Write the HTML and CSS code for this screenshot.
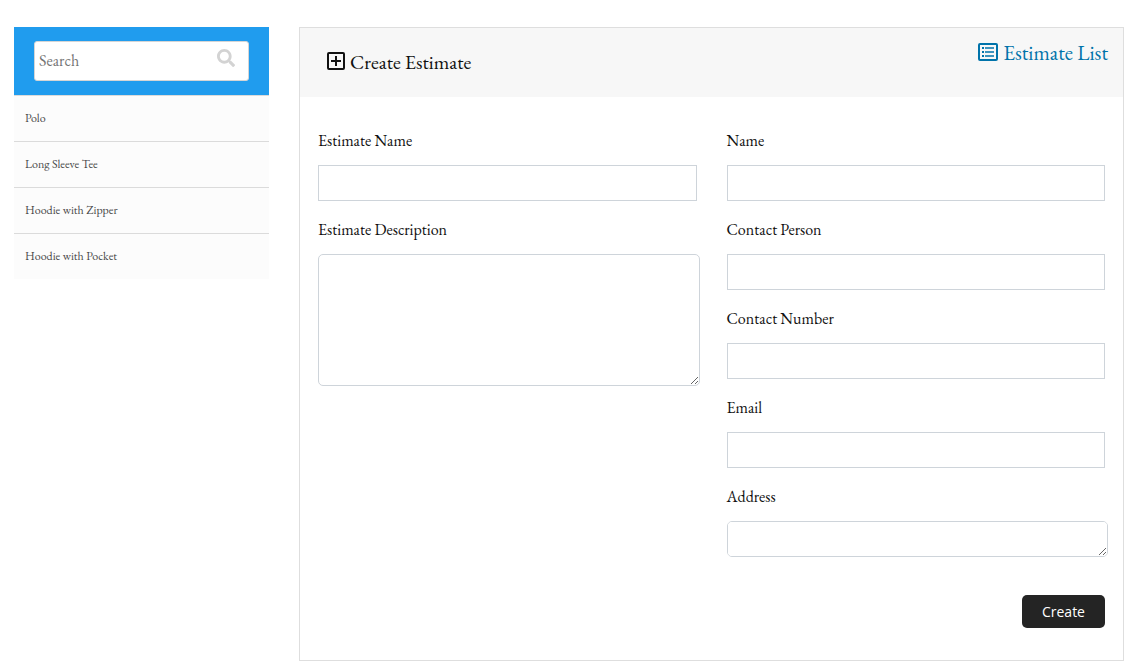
FILE: index.html
```html
<!DOCTYPE html>
<html lang="en">
<head>
<meta charset="utf-8">
<meta name="viewport" content="width=device-width, initial-scale=1">
<title>Create Estimate</title>
<link rel="stylesheet" href="styles.css">
</head>
<body>
<div class="page">
  <aside class="sidebar">
    <form class="search" role="search">
      <div class="search-box">
        <input class="search-input" type="search" placeholder="Search" aria-label="Search">
        <button class="search-button" type="submit" aria-label="Search">
          <svg width="18" height="18" viewBox="0 0 512 512" fill="currentColor" aria-hidden="true"><path d="M505 442.700 405.300 343c-4.500-4.500-10.600-7-17-7H372c27.600-35.300 44-79.700 44-128C416 93.100 322.900 0 208 0S0 93.100 0 208s93.100 208 208 208c48.300 0 92.700-16.400 128-44v16.300c0 6.400 2.500 12.500 7 17l99.700 99.700c9.400 9.400 24.600 9.400 33.900 0l28.300-28.300c9.400-9.400 9.400-24.600.1-34zM208 336c-70.700 0-128-57.200-128-128 0-70.700 57.200-128 128-128 70.700 0 128 57.200 128 128 0 70.700-57.200 128-128 128z"/></svg>
        </button>
      </div>
    </form>
    <nav class="products" aria-label="Products">
      <a class="product" href="#">Polo</a>
      <a class="product" href="#">Long Sleeve Tee</a>
      <a class="product" href="#">Hoodie with Zipper</a>
      <a class="product" href="#">Hoodie with Pocket</a>
    </nav>
  </aside>

  <main class="panel">
    <header class="panel-header">
      <h1 class="title">
        <svg width="18" height="18" viewBox="0 0 18 18" fill="none" stroke="currentColor" stroke-width="2" aria-hidden="true"><rect x="1" y="1" width="16" height="16" rx="1"/><path d="M9 4v10M4 9h10"/></svg>
        Create Estimate
      </h1>
      <a class="list-link" href="#">
        <svg width="20" height="18" viewBox="0 0 20 18" fill="none" stroke="currentColor" aria-hidden="true"><rect x="1" y="1" width="18" height="16" rx="1" stroke-width="2"/><path d="M7 5h9M7 9h9M7 13h9" stroke-width="1.500"/><path d="M4 5h2M4 9h2M4 13h2" stroke-width="2"/></svg>
        Estimate List
      </a>
    </header>
    <form class="form">
      <div class="column">
        <div class="field">
          <label class="label" for="estimate-name">Estimate Name</label>
          <input class="input" id="estimate-name" type="text">
        </div>
        <div class="field">
          <label class="label" for="description">Estimate Description</label>
          <textarea class="input textarea textarea-tall" id="description"></textarea>
        </div>
      </div>
      <div class="column">
        <div class="field">
          <label class="label" for="name">Name</label>
          <input class="input" id="name" type="text">
        </div>
        <div class="field">
          <label class="label" for="person">Contact Person</label>
          <input class="input" id="person" type="text">
        </div>
        <div class="field">
          <label class="label" for="number">Contact Number</label>
          <input class="input" id="number" type="tel">
        </div>
        <div class="field">
          <label class="label" for="email">Email</label>
          <input class="input" id="email" type="email">
        </div>
        <div class="field">
          <label class="label" for="address">Address</label>
          <textarea class="input textarea" id="address"></textarea>
        </div>
        <button class="submit" type="submit">Create</button>
      </div>
    </form>
  </main>
</div>
</body>
</html>
```

FILE: styles.css
```css
*,
*::before,
*::after {
  box-sizing: border-box;
}

body {
  margin: 0;
  background: #fff;
  color: #111;
  font: 16px/24px "EB Garamond", "Liberation Serif", serif;
}

.page {
  display: flex;
  align-items: flex-start;
  gap: 30px;
  padding: 27px 16px 6px 14px;
}

.sidebar {
  flex: 0 0 255px;
  min-width: 0;
}

.search {
  padding: 14px 20px;
  background: #209cee;
}

.search-box {
  display: flex;
  height: 40px;
  border: 1px solid #d5d5d5;
  border-radius: 3px;
  background: #fff;
}

.search-input {
  flex: 1;
  min-width: 0;
  padding: 0 4px;
  border: 0;
  background: none;
  color: #444;
  font: inherit;
  outline: none;
}

.search-input::placeholder {
  color: #757575;
  opacity: 1;
}

.search-button {
  display: flex;
  align-items: flex-start;
  padding: 7px 13px;
  border: 0;
  background: none;
  color: #d3d3d3;
}

.product {
  display: block;
  padding: 10px 11px 11px;
  border-top: 1px solid #dbdbdb;
  background: #fcfcfc;
  color: #4a4a4a;
  font-size: 12px;
  text-decoration: none;
}

.panel {
  flex: 1;
  min-width: 0;
  border: 1px solid #dedede;
}

.panel-header {
  display: flex;
  justify-content: space-between;
  align-items: flex-start;
  padding: 13px 15px 23px 27px;
  background: #f7f7f7;
}

.title,
.list-link {
  display: flex;
  align-items: center;
  gap: 5px;
  margin: 0;
  font-size: 20px;
  font-weight: 400;
  line-height: 24px;
}

.title {
  padding-top: 9px;
}

.title svg,
.list-link svg {
  margin-bottom: 3px;
}

.list-link {
  color: #0073aa;
  font-size: 21px;
  text-decoration: none;
}

.form {
  display: grid;
  grid-template-columns: 1fr 1fr;
  gap: 30px;
  padding: 32px 18px;
}

.column {
  display: flex;
  flex-direction: column;
  gap: 17px;
  min-width: 0;
}

.field {
  display: flex;
  flex-direction: column;
  gap: 12px;
}

.input {
  width: 100%;
  height: 36px;
  padding: 6px 12px;
  border: 1px solid #ced4da;
  border-radius: 0;
  background: #fff;
  color: #333;
  font: inherit;
}

.textarea {
  width: calc(100% + 3px);
  border-radius: 5px;
  resize: both;
}

.textarea-tall {
  height: 132px;
}

.submit {
  align-self: flex-end;
  height: 33px;
  margin-top: 21px;
  padding: 0 20px;
  border: 0;
  border-radius: 5px;
  background: #242424;
  color: #fff;
  font: 14px/20px "Open Sans", sans-serif;
}
```
